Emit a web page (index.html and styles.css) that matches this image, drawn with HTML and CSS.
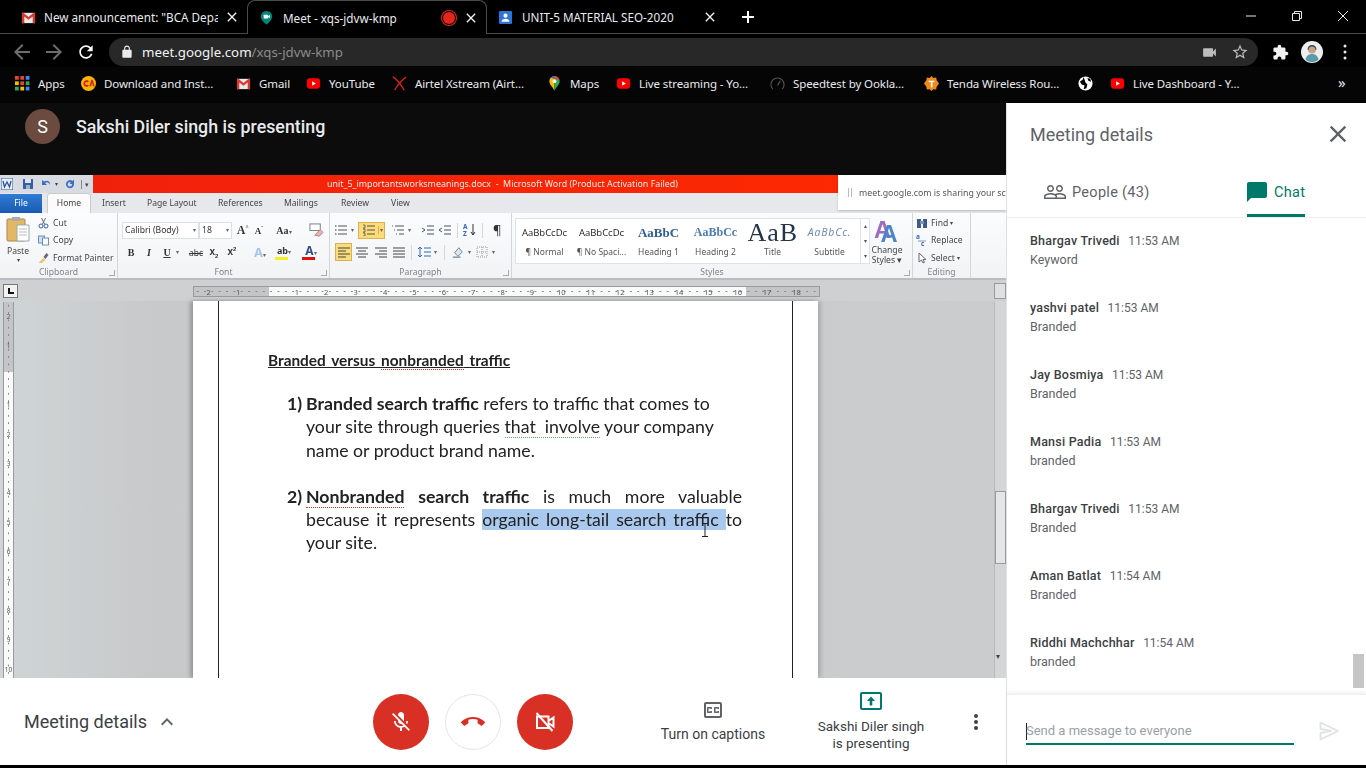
FILE: index.html
```html
<!DOCTYPE html>
<html lang="en">
<head>
<meta charset="utf-8">
<title>Meet - xqs-jdvw-kmp</title>
<link rel="stylesheet" href="styles.css">
</head>
<body>
<svg class="defs" width="0" height="0" aria-hidden="true">
  <symbol id="yt" viewBox="0 0 16 16"><rect x="1" y="2.500" width="14" height="11" rx="3" fill="#f00"/><path d="M6.500 5.500v5l4-2.500z" fill="#fff"/></symbol>
  <symbol id="gm" viewBox="0 0 16 16"><rect x="1" y="3" width="14" height="11" fill="#e8e8e8"/><path d="M1 3v11h2.500V7L8 10.500 12.500 7v7H15V3h-1.500L8 7.500 2.500 3z" fill="#d93a30"/></symbol>
  <symbol id="x" viewBox="0 0 24 24"><path d="M19 6.410L17.590 5 12 10.590 6.410 5 5 6.410 10.590 12 5 17.590 6.410 19 12 13.410 17.590 19 19 17.590 13.410 12z"/></symbol>
</svg>

<header class="tabstrip">
  <div class="tab tab-one">
    <svg class="fav" viewBox="0 0 16 16"><use href="#gm"/></svg>
    <span class="tab-title t1">New announcement: "BCA Depar</span>
    <svg class="tab-x" viewBox="0 0 24 24"><use href="#x"/></svg>
  </div>
  <div class="tab tab-active">
    <svg class="fav" viewBox="0 0 16 16"><path d="M8 1a6 6 0 0 0-6 6c0 3.500 3.500 6.500 6 8.500 2.500-2 6-5 6-8.500a6 6 0 0 0-6-6z" fill="#00897b"/><rect x="5" y="5" width="4.500" height="4" rx=".6" fill="#fff"/><path d="M9.500 6.500l2-1.200v3.400l-2-1.200z" fill="#fff"/></svg>
    <span class="tab-title t2">Meet - xqs-jdvw-kmp</span>
    <span class="rec"></span>
    <svg class="tab-x" viewBox="0 0 24 24"><use href="#x"/></svg>
  </div>
  <div class="tab tab-three">
    <svg class="fav" viewBox="0 0 16 16"><rect x="1" y="1" width="14" height="14" rx="1.500" fill="#2f74d8"/><circle cx="8" cy="6" r="2.200" fill="#fff"/><path d="M3.800 12.500c0-2.300 2-3.300 4.200-3.300s4.200 1 4.200 3.300z" fill="#fff"/></svg>
    <span class="tab-title t3">UNIT-5 MATERIAL SEO-2020</span>
    <svg class="tab-x" viewBox="0 0 24 24"><use href="#x"/></svg>
  </div>
  <svg class="newtab" viewBox="0 0 14 14"><path d="M6 1h2v5h5v2H8v5H6V8H1V6h5z"/></svg>
  <div class="winctl">
    <svg viewBox="0 0 12 12"><path d="M1 6h10"/></svg>
    <svg viewBox="0 0 12 12"><path d="M1.500 3.500h7v7h-7zM3.500 3.500v-2h7v7h-2"/></svg>
    <svg viewBox="0 0 12 12"><path d="M1 1l10 10M11 1L1 11"/></svg>
  </div>
</header>

<nav class="toolbar">
  <svg class="nav-ic dim" viewBox="0 0 24 24"><path d="M20 11H7.830l5.590-5.590L12 4l-8 8 8 8 1.410-1.410L7.830 13H20v-2z"/></svg>
  <svg class="nav-ic dim" viewBox="0 0 24 24"><path d="M4 11h12.170l-5.590-5.590L12 4l8 8-8 8-1.410-1.410L16.170 13H4v-2z"/></svg>
  <svg class="nav-ic" viewBox="0 0 24 24"><path d="M17.650 6.350C16.200 4.900 14.210 4 12 4c-4.420 0-7.990 3.580-7.990 8s3.570 8 7.990 8c3.730 0 6.840-2.550 7.730-6h-2.080c-.82 2.330-3.040 4-5.650 4-3.310 0-6-2.690-6-6s2.690-6 6-6c1.660 0 3.140.69 4.220 1.780L13 11h7V4l-2.350 2.350z"/></svg>
  <div class="omnibox">
    <svg class="lock" viewBox="0 0 24 24"><path d="M18 8h-1V6c0-2.760-2.240-5-5-5S7 3.240 7 6v2H6c-1.100 0-2 .9-2 2v10c0 1.100.9 2 2 2h12c1.100 0 2-.9 2-2V10c0-1.100-.9-2-2-2zM9 6c0-1.660 1.340-3 3-3s3 1.340 3 3v2H9V6z"/></svg>
    <span class="url"><b>meet.google.com</b>/xqs-jdvw-kmp</span>
    <svg class="omni-cam" viewBox="0 0 24 24"><path d="M17 10.500V7c0-.55-.45-1-1-1H4c-.55 0-1 .45-1 1v10c0 .55.45 1 1 1h12c.55 0 1-.45 1-1v-3.500l4 4v-11l-4 4z"/></svg>
    <svg class="omni-star" viewBox="0 0 24 24"><path d="M22 9.240l-7.190-.62L12 2 9.190 8.630 2 9.240l5.460 4.730L5.820 21 12 17.270 18.180 21l-1.630-7.030L22 9.240zM12 15.400l-3.760 2.270 1-4.280-3.320-2.880 4.380-.38L12 6.100l1.710 4.040 4.380.38-3.320 2.880 1 4.280L12 15.400z"/></svg>
  </div>
  <svg class="ext" viewBox="0 0 24 24"><path d="M20.500 11H19V7c0-1.100-.9-2-2-2h-4V3.500C13 2.120 11.880 1 10.500 1S8 2.120 8 3.500V5H4c-1.100 0-1.990.9-1.990 2v3.800H3.500c1.490 0 2.700 1.210 2.700 2.700s-1.210 2.700-2.700 2.700H2V20c0 1.100.9 2 2 2h3.800v-1.500c0-1.490 1.210-2.700 2.700-2.700 1.490 0 2.700 1.210 2.700 2.700V22H17c1.100 0 2-.9 2-2v-4h1.500c1.380 0 2.500-1.120 2.500-2.500S21.880 11 20.500 11z"/></svg>
  <svg class="profile" viewBox="0 0 22 22"><circle cx="11" cy="11" r="11" fill="#eee"/><circle cx="11" cy="8.500" r="4" fill="#c9a08a"/><path d="M6.500 8.500a4.500 4.500 0 0 1 9 0l-1 .5a3.500 3.500 0 0 0-7 0z" fill="#345"/><path d="M4.500 19c.5-4 3-6 6.500-6s6 2 6.500 6a11 11 0 0 1-13 0z" fill="#5b9aa8"/></svg>
  <svg class="kebab" viewBox="0 0 4 16"><circle cx="2" cy="2" r="1.500"/><circle cx="2" cy="8" r="1.500"/><circle cx="2" cy="14" r="1.500"/></svg>
</nav>

<nav class="bookmarks">
  <div class="bm bm-apps">
    <svg class="bm-ic" viewBox="0 0 14 14"><g fill="#ea4335"><rect width="3.500" height="3.500"/><rect x="5" width="3.500" height="3.500"/></g><rect x="10" width="3.500" height="3.500" fill="#4285f4"/><rect y="5" width="3.500" height="3.500" fill="#fbbc05"/><rect x="5" y="5" width="3.500" height="3.500" fill="#ea4335"/><rect x="10" y="5" width="3.500" height="3.500" fill="#34a853"/><rect y="10" width="3.500" height="3.500" fill="#34a853"/><rect x="5" y="10" width="3.500" height="3.500" fill="#fbbc05"/><rect x="10" y="10" width="3.500" height="3.500" fill="#4285f4"/></svg>
    <span>Apps</span>
  </div>
  <div class="bm bm-dl">
    <svg class="bm-ic" viewBox="0 0 16 16"><circle cx="8" cy="8" r="8" fill="#f7b500"/><path d="M2.500 8a3.500 3.500 0 0 1 6-2.500L7 7a1.500 1.500 0 1 0 0 2l1.500 1.500A3.500 3.500 0 0 1 2.500 8z" fill="#d6201f"/><path d="M9 11l2-7h1.500l2 7h-1.700l-1-4-1 4z" fill="#d6201f"/></svg>
    <span>Download and Inst...</span>
  </div>
  <div class="bm bm-gm"><svg class="bm-ic" viewBox="0 0 16 16"><use href="#gm"/></svg><span>Gmail</span></div>
  <div class="bm bm-yt"><svg class="bm-ic" viewBox="0 0 16 16"><use href="#yt"/></svg><span>YouTube</span></div>
  <div class="bm bm-air"><svg class="bm-ic" viewBox="0 0 16 16"><path d="M1 1c5 3 9 9 12 14M15 1C10 5 6 9 3 15" fill="none" stroke="#e0201c" stroke-width="1.400"/></svg><span>Airtel Xstream (Airt...</span></div>
  <div class="bm bm-maps"><svg class="bm-ic" viewBox="0 0 16 16"><path d="M8 0a5.500 5.500 0 0 0-5.500 5.500c0 4 4 6 5.500 10.500z" fill="#fbbc05"/><path d="M8 0a5.500 5.500 0 0 1 5.500 5.500c0 4-4 6-5.500 10.500z" fill="#34a853"/><path d="M4 1.700A5.500 5.500 0 0 1 8 0v3.500z" fill="#1a73e8"/><path d="M8 0a5.500 5.500 0 0 1 4.800 3L8 5z" fill="#ea4335"/><circle cx="8" cy="5.500" r="2" fill="#fff"/></svg><span>Maps</span></div>
  <div class="bm bm-live"><svg class="bm-ic" viewBox="0 0 16 16"><use href="#yt"/></svg><span>Live streaming - Yo...</span></div>
  <div class="bm bm-speed"><svg class="bm-ic" viewBox="0 0 16 16"><path d="M3 14a7 7 0 1 1 10 0M8 10l3-5" fill="none" stroke="#555" stroke-width="1.200"/></svg><span>Speedtest by Ookla...</span></div>
  <div class="bm bm-tenda"><svg class="bm-ic" viewBox="0 0 16 16"><path d="M8 0l2 2 3-.5.500 3 2.500 3.500-2.500 3.500-.5 3-3-.5L8 16l-2-2-3 .5-.5-3L0 8l2.500-3.500.5-3 3 .5z" fill="#ef8a1d"/><path d="M5 5h6v1.500H9V12H7.300V6.500H5z" fill="#fff"/></svg><span>Tenda Wireless Rou...</span></div>
  <div class="bm bm-globe"><svg class="bm-ic" viewBox="0 0 16 16"><circle cx="8" cy="8" r="7.500" fill="#fff"/><path d="M6 1l-1 3-3 2 2 3 3 1-1 4 3-1 1-4-2-2zM10 2l1 3 3 1-1-3z" fill="#000"/></svg></div>
  <div class="bm bm-dash"><svg class="bm-ic" viewBox="0 0 16 16"><use href="#yt"/></svg><span>Live Dashboard - Y...</span></div>
  <span class="more">»</span>
</nav>

<main class="meet">
  <section class="stage">
    <div class="presenter">
      <span class="avatar">S</span>
      <span class="presenter-name">Sakshi Diler singh is presenting</span>
    </div>

    <div class="word">
      <div class="w-title">
        <div class="qat">
          <svg class="qat-w" viewBox="0 0 12 12"><rect width="12" height="12" fill="#e6eef8" stroke="#2a5699"/><path d="M2 3l1.500 6L6 4l2.500 5L10 3" fill="none" stroke="#2a5699" stroke-width="1.300"/></svg>
          <svg class="qat-i q-save" viewBox="0 0 12 12"><rect x="1" y="1" width="10" height="10" fill="#3b5da8"/><rect x="3" y="1" width="6" height="4" fill="#dfe6f3"/><rect x="4" y="7" width="4" height="4" fill="#9bb"/></svg>
          <svg class="qat-i q-undo" viewBox="0 0 12 12"><path d="M2 2v5h5L5 5c2-1.500 4-.5 5 2 .5-3-2-5.500-6-3.500z" fill="#3d6fc0"/></svg>
          <span class="qat-caret">▾</span>
          <svg class="qat-i q-redo" viewBox="0 0 12 12"><path d="M10 6a4 4 0 1 1-1.500-3L10 1.500V6H5.500l1.500-1.500A2.200 2.200 0 1 0 8 6z" fill="#3d6fc0"/></svg>
          <span class="qat-end">▾</span>
        </div>
        <div class="w-redbar">unit_5_importantsworksmeanings.docx  -  Microsoft Word (Product Activation Failed)</div>
      </div>

      <div class="w-tabs">
        <span class="w-file">File</span>
        <span class="w-home">Home</span>
        <span class="wt-insert">Insert</span>
        <span class="wt-page">Page Layout</span>
        <span class="wt-ref">References</span>
        <span class="wt-mail">Mailings</span>
        <span class="wt-review">Review</span>
        <span class="wt-view">View</span>
      </div>

      <div class="ribbon">
        <div class="group g-clip">
          <div class="g-body clip">
            <div class="paste">
              <svg viewBox="0 0 24 26"><rect x="1" y="3" width="18" height="22" rx="1" fill="#e2b768" stroke="#a98a4c"/><rect x="6" y="1" width="8" height="4" fill="#aaa"/><path d="M11 9h12v16H11z" fill="#fff" stroke="#9aa"/><path d="M13 13h8M13 16h8M13 19h8" stroke="#bbb"/></svg>
              <span>Paste</span><i>▾</i>
            </div>
            <ul class="cliplist">
              <li><svg viewBox="0 0 12 12"><path d="M4 1l3 6M8 1L5 7" stroke="#667" fill="none"/><circle cx="3.500" cy="9" r="2" fill="none" stroke="#3a5fa8"/><circle cx="8.500" cy="9" r="2" fill="none" stroke="#3a5fa8"/></svg>Cut</li>
              <li><svg viewBox="0 0 12 12"><rect x="1" y="2" width="6" height="7" fill="#cfe0f3" stroke="#6a8fbf"/><rect x="5" y="4" width="6" height="7" fill="#fff" stroke="#6a8fbf"/></svg>Copy</li>
              <li><svg viewBox="0 0 12 12"><path d="M1 11l5-5 2 2-4 3z" fill="#e8c560"/><path d="M6 5l3-4 2 2-3 4z" fill="#667"/></svg>Format Painter</li>
            </ul>
          </div>
          <div class="g-label">Clipboard<i class="launch"></i></div>
        </div>

        <div class="group g-font">
          <div class="g-body stack">
            <div class="row r-font1">
              <span class="sel-font">Calibri (Body)<i>▾</i></span><span class="sel-size">18<i>▾</i></span>
              <b class="grow-a">A<sup>^</sup></b><b class="shrink-a">A<sup>ˇ</sup></b>
              <b class="case-a">Aa<i>▾</i></b>
              <svg class="clear-f" viewBox="0 0 16 16"><rect x="1" y="1" width="11" height="7" fill="#fff" stroke="#778"/><path d="M6 13l6-6 3 3-4 4z" fill="#e9b4b0" stroke="#a88"/></svg>
            </div>
            <div class="row r-font2">
              <b class="f-b">B</b><em class="f-i">I</em><u class="f-u">U</u><i class="f-car">▾</i>
              <s class="f-s">abc</s><b class="f-x">x<sub>2</sub></b><b class="f-x2">x<sup>2</sup></b>
              <b class="f-eff">A<i>▾</i></b>
              <b class="f-hi">ab<i>▾</i></b>
              <b class="f-col">A<i>▾</i></b>
            </div>
          </div>
          <div class="g-label">Font<i class="launch"></i></div>
        </div>

        <div class="group g-para">
          <div class="g-body stack">
            <div class="row r-p1">
              <svg class="pi" viewBox="0 0 14 12"><path d="M4 2h9M4 6h9M4 10h9" stroke="#555"/><path d="M1 2h1.500M1 6h1.500M1 10h1.500" stroke="#333"/></svg><i class="car">▾</i>
              <span class="hl-split"><svg class="pi" viewBox="0 0 14 12"><path d="M5 2h8M5 6h8M5 10h8" stroke="#555"/><path d="M1 1h2v3H1M1 5h2v3H1M1 9h2v3H1" fill="none" stroke="#345" stroke-width=".7"/></svg><i class="split-c">▾</i></span>
              <svg class="pi ml-6" viewBox="0 0 14 12"><path d="M4 2h9M6 6h7M8 10h5" stroke="#555"/><path d="M1 2h1M3 6h1M5 10h1" stroke="#36b"/></svg><i class="car">▾</i>
              <svg class="pi ml-8" viewBox="0 0 14 12"><path d="M6 2h7M6 6h7M6 10h7M1 4l3 2-3 2" stroke="#456" fill="none"/></svg>
              <svg class="pi ml-3" viewBox="0 0 14 12"><path d="M6 2h7M6 6h7M6 10h7M4 4L1 6l3 2" stroke="#456" fill="none"/></svg>
              <span class="vsep"></span>
              <svg class="pi sort" viewBox="0 0 14 14"><text x="0" y="6" class="svgt">A</text><text x="0" y="13" class="svgt">Z</text><path d="M10 1v11M8 9l2 3 2-3" stroke="#333" fill="none"/></svg>
              <span class="vsep"></span>
              <span class="pilcrow">¶</span>
            </div>
            <div class="row r-p2">
              <span class="hl-box"><svg class="pi" viewBox="0 0 14 12"><path d="M1 2h12M1 5h8M1 8h12M1 11h8" stroke="#444" stroke-width="1.200"/></svg></span>
              <svg class="pi al-c" viewBox="0 0 14 12"><path d="M1 2h12M3 5h8M1 8h12M3 11h8" stroke="#444" stroke-width="1.200"/></svg>
              <svg class="pi al-n" viewBox="0 0 14 12"><path d="M1 2h12M5 5h8M1 8h12M5 11h8" stroke="#444" stroke-width="1.200"/></svg>
              <svg class="pi al-n" viewBox="0 0 14 12"><path d="M1 2h12M1 5h12M1 8h12M1 11h12" stroke="#444" stroke-width="1.200"/></svg>
              <span class="vsep"></span>
              <svg class="pi" viewBox="0 0 14 12"><path d="M7 2h7M7 6h7M7 10h7M3 1v10M1 3l2-2 2 2M1 9l2 2 2-2" stroke="#36b" fill="none"/></svg><i class="car">▾</i>
              <span class="vsep"></span>
              <svg class="pi shade" viewBox="0 0 14 14"><path d="M3 8l5-6 4 5-5 5z" fill="#dfe6ee" stroke="#678"/><path d="M1 13h9" stroke="#789" stroke-width="1.500"/></svg><i class="car">▾</i>
              <svg class="pi border" viewBox="0 0 12 12"><path d="M1 1h10v10H1zM6 1v10M1 6h10" stroke="#999" stroke-dasharray="1 1" fill="none"/></svg><i class="car">▾</i>
            </div>
          </div>
          <div class="g-label">Paragraph<i class="launch"></i></div>
        </div>

        <div class="group g-styles">
          <div class="g-body styles-body">
            <div class="gallery">
              <div class="style-it"><span class="s-n">AaBbCcDc</span><small>¶ Normal</small></div>
              <div class="style-it"><span class="s-n">AaBbCcDc</span><small>¶ No Spaci...</small></div>
              <div class="style-it"><span class="s-h1">AaBbC</span><small>Heading 1</small></div>
              <div class="style-it"><span class="s-h2">AaBbCc</span><small>Heading 2</small></div>
              <div class="style-it"><span class="s-t">AaB</span><small>Title</small></div>
              <div class="style-it"><span class="s-s">AaBbCc.</span><small>Subtitle</small></div>
              <div class="g-scroll"><i>▴</i><i>▾</i><i>▾</i></div>
            </div>
            <div class="change">
              <svg viewBox="0 0 26 24"><text x="1" y="18" class="bigA a1">A</text><text x="7" y="22" class="bigA a2">A</text></svg>
              <span>Change</span><span>Styles ▾</span>
            </div>
          </div>
          <div class="g-label">Styles<i class="launch"></i></div>
        </div>

        <div class="group g-edit">
          <ul class="g-body editlist">
            <li><svg viewBox="0 0 12 12"><rect x="1" y="2" width="4" height="9" fill="#3c5a8c"/><rect x="7" y="2" width="4" height="9" fill="#3c5a8c"/><rect x="4" y="4" width="4" height="3" fill="#7c90b0"/></svg>Find <i>▾</i></li>
            <li><svg viewBox="0 0 12 12"><text x="0" y="5" class="svgt">a</text><path d="M2 7h8" stroke="#89a"/><text x="5" y="12" class="svgt">c</text></svg>Replace</li>
            <li><svg viewBox="0 0 12 12"><path d="M3 1v9l2.500-2 1.500 3 1.500-.7L7 7.500h3z" fill="#fff" stroke="#667"/></svg>Select <i>▾</i></li>
          </ul>
          <div class="g-label">Editing</div>
        </div>
      </div>

      <div class="w-ruler-row">
        <span class="tabstop"><b></b></span>
        <div class="h-ruler">
          <span>2</span><span>1</span><span></span><span>1</span><span>2</span><span>3</span><span>4</span><span>5</span><span>6</span><span>7</span><span>8</span><span>9</span><span>10</span><span>11</span><span>12</span><span>13</span><span>14</span><span>15</span><span>16</span><span>17</span><span>18</span>
        </div>
        <span class="view-btn"></span>
      </div>

      <div class="w-doc">
        <div class="v-ruler">
          <span>2</span><span>1</span><span></span><span>1</span><span>2</span><span>3</span><span>4</span><span>5</span><span>6</span><span>7</span><span>8</span><span>9</span><span>10</span>
        </div>
        <div class="page">
          <div class="textarea">
            <h1 class="doc-h">Branded versus <span class="spell">nonbranded</span> traffic</h1>
            <div class="li">
              <span class="num">1)</span>
              <p><b>Branded search traffic</b> refers to traffic that comes to your site through queries <span class="gram">that&nbsp; involve</span> your company name or product brand name.</p>
            </div>
            <div class="li just">
              <span class="num">2)</span>
              <p><b class="spellb">Nonbranded</b> <b>search traffic</b> is much more valuable because it represents <span class="sel">organic long-tail search traffic <svg class="ibeam" viewBox="0 0 8 14"><path d="M1 .5h6M4 .5v13M1 13.500h6" stroke="#222" fill="none"/></svg></span>to your site.</p>
            </div>
          </div>
        </div>
        <div class="w-scroll">
          <i class="sc-thumb"></i>
          <i class="sc-down">▾</i>
        </div>
      </div>

      <div class="share-note"><span class="bars"></span>meet.google.com is sharing your sc</div>
    </div>

    <footer class="callbar">
      <div class="details-btn">Meeting details
        <svg viewBox="0 0 24 24"><path d="M12 8l-6 6 1.410 1.410L12 10.830l4.590 4.580L18 14z"/></svg>
      </div>
      <div class="round-btns">
        <span class="round red"><svg viewBox="0 0 24 24"><path d="M19 11h-1.700c0 .74-.16 1.430-.43 2.050l1.230 1.230c.56-.98.9-2.090.9-3.280zm-4.020.17c0-.06.02-.11.02-.17V5c0-1.660-1.340-3-3-3S9 3.340 9 5v.18l5.980 5.990zM4.270 3L3 4.270l6.010 6.010V11c0 1.660 1.330 3 2.990 3 .22 0 .44-.03.65-.08l1.660 1.660c-.71.33-1.500.52-2.310.52-2.760 0-5.300-2.100-5.300-5.100H5c0 3.410 2.720 6.230 6 6.720V21h2v-3.280c.91-.13 1.770-.45 2.540-.9L19.730 21 21 19.730 4.270 3z"/></svg></span>
        <span class="round hang"><svg viewBox="0 0 24 24"><path d="M12 9c-1.600 0-3.150.25-4.600.72v3.100c0 .39-.23.74-.56.9-.98.49-1.870 1.120-2.660 1.850-.18.18-.43.28-.7.28-.28 0-.53-.11-.71-.29L.29 13.080c-.18-.17-.29-.42-.29-.7 0-.28.11-.53.29-.71C3.340 8.780 7.460 7 12 7s8.660 1.780 11.710 4.670c.18.18.29.43.29.71 0 .28-.11.53-.29.71l-2.480 2.480c-.18.18-.43.29-.71.29-.27 0-.52-.11-.7-.28-.79-.74-1.690-1.360-2.670-1.850-.33-.16-.56-.5-.56-.9v-3.100C15.150 9.250 13.600 9 12 9z"/></svg></span>
        <span class="round red"><svg viewBox="0 0 24 24"><path d="M4 6.500h11.500v11.500H4zM15.500 11l5-3.500v9l-5-3.500" fill="none" stroke="#fff" stroke-width="2"/><path d="M3.500 3l16 18" stroke="#fff" stroke-width="2" fill="none"/></svg></span>
      </div>
      <div class="caption-btn">
        <svg viewBox="0 0 24 24"><path d="M19 4H5c-1.110 0-2 .9-2 2v12c0 1.100.89 2 2 2h14c1.100 0 2-.9 2-2V6c0-1.100-.9-2-2-2zm0 14H5V6h14v12zM7 15h3c.55 0 1-.45 1-1v-1H9.500v.5h-2v-3h2v.5H11v-1c0-.55-.45-1-1-1H7c-.55 0-1 .45-1 1v4c0 .55.45 1 1 1zm7 0h3c.55 0 1-.45 1-1v-1h-1.500v.5h-2v-3h2v.5H18v-1c0-.55-.45-1-1-1h-3c-.55 0-1 .45-1 1v4c0 .55.45 1 1 1z"/></svg>
        <span>Turn on captions</span>
      </div>
      <div class="present-btn">
        <svg viewBox="0 0 24 24"><path d="M21 3H3c-1.100 0-2 .9-2 2v14c0 1.100.9 2 2 2h18c1.100 0 2-.9 2-2V5c0-1.100-.9-2-2-2zm0 16H3V5h18v14zM12 7.500l-4 4.500h2.700v4.500h2.600V12H16z"/></svg>
        <span>Sakshi Diler singh<br>is presenting</span>
      </div>
      <svg class="call-more" viewBox="0 0 4 16"><circle cx="2" cy="2" r="2"/><circle cx="2" cy="8" r="2"/><circle cx="2" cy="14" r="2"/></svg>
    </footer>
  </section>

  <aside class="panel">
    <div class="panel-head">
      <span>Meeting details</span>
      <svg viewBox="0 0 24 24"><use href="#x"/></svg>
    </div>
    <div class="panel-tabs">
      <div class="ptab people">
        <svg viewBox="0 0 24 24"><path d="M16.500 13c-1.200 0-3.070.34-4.500 1-1.430-.67-3.300-1-4.500-1C5.330 13 1 14.080 1 16.250V19h22v-2.750c0-2.170-4.330-3.250-6.500-3.250zm-4 4.500h-10v-1.250c0-.54 2.560-1.750 5-1.750s5 1.210 5 1.750v1.250zm9 0H14v-1.250c0-.46-.2-.86-.52-1.220.88-.3 1.960-.53 3.020-.53 2.440 0 5 1.210 5 1.750v1.250zM7.500 12c1.930 0 3.500-1.570 3.500-3.500S9.430 5 7.500 5 4 6.570 4 8.500 5.570 12 7.500 12zm0-5.500c1.100 0 2 .9 2 2s-.9 2-2 2-2-.9-2-2 .9-2 2-2zm9 5.500c1.930 0 3.500-1.570 3.500-3.500S18.430 5 16.500 5 13 6.570 13 8.500s1.570 3.500 3.500 3.500zm0-5.500c1.100 0 2 .9 2 2s-.9 2-2 2-2-.9-2-2 .9-2 2-2z"/></svg>
        <span>People (43)</span>
      </div>
      <div class="ptab chat">
        <svg viewBox="0 0 20 20"><path d="M2 0h16c1.100 0 2 .9 2 2v12c0 1.100-.9 2-2 2H4l-4 4V2C0 .9.9 0 2 0z"/></svg>
        <span>Chat</span>
      </div>
    </div>
    <div class="messages">
      <div class="msg"><div class="meta"><b>Bhargav Trivedi</b><time>11:53 AM</time></div><p>Keyword</p></div>
      <div class="msg"><div class="meta"><b>yashvi patel</b><time>11:53 AM</time></div><p>Branded</p></div>
      <div class="msg"><div class="meta"><b>Jay Bosmiya</b><time>11:53 AM</time></div><p>Branded</p></div>
      <div class="msg"><div class="meta"><b>Mansi Padia</b><time>11:53 AM</time></div><p>branded</p></div>
      <div class="msg"><div class="meta"><b>Bhargav Trivedi</b><time>11:53 AM</time></div><p>Branded</p></div>
      <div class="msg"><div class="meta"><b>Aman Batlat</b><time>11:54 AM</time></div><p>Branded</p></div>
      <div class="msg"><div class="meta"><b>Riddhi Machchhar</b><time>11:54 AM</time></div><p>branded</p></div>
      <i class="chat-thumb"></i>
    </div>
    <div class="compose">
      <div class="compose-input"><span class="caret"></span>Send a message to everyone</div>
      <svg viewBox="0 0 24 24"><path d="M3.500 3.500L21 12 3.500 20.500v-6.500L14 12 3.500 10z" fill="none" stroke="#e0e2e5" stroke-width="1.800" stroke-linejoin="round"/></svg>
    </div>
  </aside>
</main>
</body>
</html>
```
FILE: styles.css
```css
* { box-sizing: border-box; }
html, body { margin: 0; padding: 0; }
body {
  width: 1366px; height: 768px; overflow: hidden; background: #000;
  font-family: "Noto Sans", "Open Sans", sans-serif; display: flex; flex-direction: column;
}
.defs { position: absolute; }
ul { list-style: none; margin: 0; padding: 0; }
i { font-style: normal; }

/* tab strip */
.tabstrip { height: 34px; flex: none; display: flex; align-items: stretch; background: #000; border-bottom: 1px solid #4a4a4a; }
.tab { display: flex; align-items: center; color: #e8eaed; height: 34px; font-size: 11.700px; flex: none; }
.tab-one { width: 247px; padding-left: 21px; }
.tab-active { width: 240px; padding-left: 11px; background: #000; border: 1px solid #4a4a4a; border-bottom: 0; border-radius: 8px 8px 0 0; }
.tab-three { width: 238px; padding-left: 11px; }
.fav { width: 15px; height: 15px; flex: none; }
.tab-title { white-space: nowrap; overflow: hidden; display: block; flex: none; }
.t1 { width: 174px; margin-left: 8px; }
.t2 { width: 160px; margin-left: 9px; }
.t3 { width: 174px; margin-left: 9px; }
.tab-x { width: 16px; height: 16px; fill: #f1f3f4; flex: none; margin-left: 6px; }
.rec { width: 12px; height: 12px; border-radius: 50%; background: #e3261c; box-shadow: 0 0 0 1px #000, 0 0 0 2px #e3261c; flex: none; }
.tab-active .tab-x { margin-left: 8px; }
.newtab { width: 14px; height: 14px; fill: #fff; margin: 10px 0 0 16px; }
.winctl { margin-left: auto; display: flex; gap: 34px; padding: 10px 17px 0 0; }
.winctl svg { width: 12px; height: 12px; fill: none; stroke: #e8e8e8; stroke-width: 1; }

/* toolbar */
.toolbar { height: 33px; flex: none; display: flex; align-items: center; background: #000; padding: 3px 0 0 10px; }
.nav-ic { width: 24px; height: 24px; fill: #fff; margin-right: 8px; flex: none; }
.nav-ic.dim { fill: #6d6d6d; }
.nav-ic:nth-child(3) { width: 20px; height: 20px; margin-right: 13px; margin-left: 2px; }
.omnibox { width: 1149px; height: 28px; background: #282828; border-radius: 14px; display: flex; align-items: center; padding-left: 11px; }
.lock { width: 14px; height: 14px; fill: #e8eaed; flex: none; }
.url { margin-left: 8px; font-size: 13.300px; color: #8a8a8a; }
.url b { font-weight: 400; color: #f1f3f4; }
.omni-cam { width: 17px; height: 17px; fill: #bdbdbd; margin-left: auto; }
.omni-star { width: 18px; height: 18px; fill: #bdbdbd; margin: 0 9px 0 13px; }
.ext { width: 17px; height: 17px; fill: #f1f3f4; margin-left: 14px; }
.profile { width: 22px; height: 22px; margin-left: 12px; }
.kebab { width: 4px; height: 16px; fill: #e8eaed; margin-left: 20px; }

/* bookmarks */
.bookmarks { height: 36px; flex: none; display: flex; align-items: center; background: #050505; color: #e8eaed; font-size: 11.500px; letter-spacing: -.1px; padding-bottom: 3px; }
.bm { display: flex; align-items: center; white-space: nowrap; flex: none; }
.bm-ic { width: 15px; height: 15px; flex: none; margin-right: 8px; }
.bm-apps { width: 81px; padding-left: 15px; }
.bm-dl { width: 155px; }
.bm-gm { width: 70px; }
.bm-yt { width: 86px; }
.bm-air { width: 155px; }
.bm-maps { width: 69px; }
.bm-live { width: 154px; }
.bm-speed { width: 154px; }
.bm-tenda { width: 154px; }
.bm-globe { width: 32px; }
.bm-dash { width: 228px; }
.more { font-size: 15px; color: #e8eaed; margin-top: -3px; }

/* meet layout */
.meet { flex: none; height: 662px; display: grid; grid-template-columns: 1006px 360px; grid-template-rows: 662px; }
.stage { display: flex; flex-direction: column; min-width: 0; min-height: 0; }
.presenter { height: 72px; flex: none; background: #0c0c0c; display: flex; align-items: flex-start; padding: 6px 0 0 25px; }
.avatar { width: 35px; height: 35px; border-radius: 50%; background: #6b4a40; color: #fff; display: flex; align-items: center; justify-content: center; font: 400 18px Roboto, sans-serif; }
.presenter-name { margin: 7px 0 0 16px; color: #e8eaed; font: 500 17.800px Roboto, sans-serif; }

/* word */
.word { height: 503px; flex: none; position: relative; background: #d0d1d3; filter: blur(.35px); overflow: hidden; font-family: "Noto Sans", sans-serif; color: #444; }
.w-title { height: 18px; display: flex; }
.qat { width: 93px; flex: none; background: #d8dce2; display: flex; align-items: center; padding-left: 1px; }
.qat-w { width: 12px; height: 12px; flex: none; }
.qat-i { width: 12px; height: 12px; flex: none; }
.q-save { margin-left: 9px; }
.q-undo { margin-left: 6px; }
.qat-caret { font-size: 6px; margin-left: 3px; width: 5px; }
.q-redo { margin-left: 4px; }
.qat-end { font-size: 7px; border-left: 1px solid #888; padding-left: 3px; margin-left: 5px; }
.w-redbar { flex: 1; background: linear-gradient(90deg, #f0210c, #ff2a00); color: #fbe9e4; font-size: 8.900px; white-space: pre; padding: 3px 0 0 234px; line-height: 12px; }
.w-tabs { height: 20px; display: flex; align-items: center; background: #e6e8eb; font-size: 8.600px; }
.w-tabs span { display: block; flex: none; }
.w-file { width: 42px; height: 19px; background: linear-gradient(#2f7bd6, #1a5bb0); color: #fff; text-align: center; line-height: 19px; margin-top: 1px; }
.w-home { width: 44px; height: 20px; margin-left: 5px; background: #fbfbfc; border: 1px solid #c8ccd0; border-bottom: 0; border-radius: 3px 3px 0 0; text-align: center; line-height: 19px; }
.wt-insert { margin-left: 11px; width: 45px; }
.wt-page { width: 71px; }
.wt-ref { width: 66px; }
.wt-mail { width: 57px; }
.wt-review { width: 50px; }
.ribbon { height: 67px; display: flex; background: linear-gradient(#fbfcfd, #f1f3f5); border-bottom: 2px solid #b9bcc0; }
.group { position: relative; border-right: 1px solid #d4d7da; display: flex; flex-direction: column; flex: none; }
.g-clip { width: 118px; }
.g-font { width: 212px; }
.g-para { width: 182px; }
.g-styles { width: 401px; }
.g-edit { width: 58px; }
.g-body { height: 54px; flex: none; }
.g-label { height: 11px; font-size: 8.600px; line-height: 11px; text-align: center; color: #808488; position: relative; }
.launch { position: absolute; right: 2px; top: 3px; width: 6px; height: 6px; border: 1px solid #aaa; border-width: 0 1px 1px 0; }
.clip { display: flex; }
.paste { width: 36px; display: flex; flex-direction: column; align-items: center; font-size: 8.600px; line-height: 10px; padding-top: 3px; }
.paste svg { width: 24px; height: 26px; margin-bottom: 4px; }
.paste i { font-size: 6px; line-height: 8px; }
.cliplist { padding: 1px 0 0 1px; font-size: 8.600px; }
.cliplist li, .editlist li { display: flex; align-items: center; height: 17.500px; white-space: nowrap; }
.cliplist svg { width: 13px; height: 12px; margin-right: 3px; }
.stack { padding: 8px 0 0 4px; display: flex; flex-direction: column; gap: 4px; }
.row { display: flex; align-items: center; height: 18px; color: #333; flex: none; }
.sel-font, .sel-size { display: flex; justify-content: space-between; align-items: center; height: 17px; background: #fff; border: 1px solid #dcdfe3; font-size: 8.600px; padding: 0 2px; }
.sel-font { width: 77px; }
.sel-size { width: 33px; }
.row i { font-size: 6px; color: #666; font-style: normal; font-weight: 400; }
.row sup, .row sub { font-size: 6px; }
.grow-a { font: 700 11.500px "Liberation Serif", serif; margin-left: 5px; }
.shrink-a { font: 700 9px "Liberation Serif", serif; margin-left: 6px; }
.case-a { font: 700 10px "Liberation Serif", serif; margin-left: 13px; }
.clear-f { width: 15px; height: 15px; margin-left: 17px; }
.r-font2 b, .r-font2 em, .r-font2 u, .r-font2 s { display: block; text-align: center; flex: none; }
.f-b { font: 700 10px "Liberation Serif", serif; width: 18px; }
.f-i { font: italic 700 10px "Liberation Serif", serif; width: 18px; }
.f-u { font: 700 10px "Liberation Serif", serif; width: 18px; }
.f-car { width: 10px; text-align: left; }
.f-s { font: 8.500px "Noto Sans", sans-serif; width: 20px; }
.f-x { font: 700 10px "Liberation Sans", sans-serif; width: 16px; }
.f-x2 { font: 700 10px "Liberation Sans", sans-serif; width: 20px; }
.f-eff { font: 700 13px "Noto Sans", sans-serif; color: #a8c4e8; width: 24px; margin-left: 6px; }
.f-hi { font: 700 9px "Noto Sans", sans-serif; width: 24px; height: 15px; line-height: 11px; background: linear-gradient(#f6ef26, #f6ef26) 3px 100% / 13px 3px no-repeat; }
.f-col { font: 700 12px "Noto Sans", sans-serif; color: #2f4d8a; margin-left: 3px; height: 15px; line-height: 11px; width: 24px; background: linear-gradient(#e01010, #e01010) 3px 100% / 13px 3px no-repeat; }
.pi { width: 14px; height: 12px; flex: none; }
.car { width: 8px; text-align: center; flex: none; }
.hl-split { display: flex; align-items: center; height: 17px; background: #fbdc7a; border: 1px solid #e0b050; margin-left: 2px; padding: 0 0 0 3px; width: 27px; flex: none; }
.split-c { border-left: 1px solid #e0b050; margin-left: 2px; padding-left: 1px; }
.hl-box { display: flex; align-items: center; justify-content: center; width: 17px; height: 18px; background: #fbdc7a; border: 1px solid #e0b050; flex: none; margin-left: 1px; }
.vsep { width: 1px; height: 15px; background: #d4d7da; margin: 0 5px; flex: none; }
.ml-3 { margin-left: 3px; }
.ml-6 { margin-left: 6px; }
.ml-8 { margin-left: 8px; }
.al-c { margin-left: 3px; }
.al-n { margin-left: 4.500px; }
.shade { margin-left: 1px; }
.border { margin-left: 2px; }
.sort { height: 14px; }
.svgt { font: 700 6.500px "Noto Sans", sans-serif; fill: #36b; }
.pilcrow { font-size: 13px; margin-left: 5px; }
.styles-body { display: flex; padding: 5px 0 0 3px; }
.gallery { width: 355px; height: 46px; flex: none; background: #fff; border: 1px solid #e0e3e6; display: flex; }
.style-it { width: 57px; flex: none; display: flex; flex-direction: column; align-items: center; overflow: hidden; }
.style-it > span { height: 27px; display: block; line-height: 27px; white-space: nowrap; width: 50px; overflow: hidden; text-align: center; }
.style-it small { font-size: 8.500px; line-height: 12px; color: #555; white-space: nowrap; }
.s-n { font: 9.500px "Open Sans", sans-serif; color: #222; }
.s-h1 { font: 700 13px "Liberation Serif", serif; color: #2e5e94; }
.s-h2 { font: 700 12px "Liberation Serif", serif; color: #4a7ab4; }
.s-t { font: 26px "Liberation Serif", serif; color: #24344a; letter-spacing: 1px; }
.s-s { font: italic 10.500px "Noto Sans", sans-serif; color: #6e8fba; letter-spacing: .8px; }
.g-scroll { width: 9px; margin-left: 2px; display: flex; flex-direction: column; border-left: 1px solid #e0e3e6; font-size: 6px; color: #555; text-align: center; line-height: 15px; }
.change { flex: 1; min-width: 0; display: flex; flex-direction: column; align-items: center; font-size: 8.600px; line-height: 10px; color: #444; padding-right: 8px; white-space: nowrap; }
.change svg { width: 28px; height: 27px; }
.bigA { font: 700 22px "Liberation Sans", sans-serif; }
.a1 { fill: #9c6cc0; }
.a2 { fill: #4a86c8; }
.editlist { padding: 1px 0 0 3px; font-size: 8.600px; }
.editlist svg { width: 12px; height: 12px; margin-right: 3px; flex: none; }
.editlist i { font-size: 6px; margin-left: 2px; }
.w-ruler-row { height: 21px; display: flex; align-items: flex-start; background: #cfd0d2; }
.tabstop { width: 15px; height: 14px; margin: 4px 0 0 3px; border: 1px solid #777; background: #f2f2f2; flex: none; display: flex; align-items: center; justify-content: center; }
.tabstop b { width: 6px; height: 6px; border: solid #111; border-width: 0 0 2px 2px; }
.h-ruler { width: 627px; height: 11px; margin: 6px 0 0 175px; display: flex; font-size: 7.500px; line-height: 10px; color: #555; border: 1px solid #9a9a9a; background: radial-gradient(circle, #888 .6px, transparent .9px) 0 0 / 7.350px 9px repeat-x, linear-gradient(90deg, #c4c5c7 0 75px, #fafafa 75px 552px, #c4c5c7 552px); }
.h-ruler span { width: 29.400px; text-align: center; flex: none; }
.view-btn { width: 12px; height: 16px; margin: 3px 0 0 174px; background: #dfe0e2; border: 1px solid #9a9a9a; }
.w-doc { height: 377px; display: flex; background: linear-gradient(90deg, #cfd5d6, #c8c9cb 15%, #cbccce); }
.v-ruler { width: 11px; margin: 1px 0 0 3px; flex: none; display: flex; flex-direction: column; font-size: 6.500px; line-height: 29.400px; color: #555; text-align: center; border: 1px solid #9a9a9a; border-width: 0 1px; background: radial-gradient(circle, #888 .6px, transparent .9px) 0 0 / 9px 7.350px repeat-y, linear-gradient(#c4c5c7 0 70px, #fafafa 70px); }
.v-ruler span { height: 29.400px; flex: none; }
.page { width: 625px; margin-left: 179px; background: #fff; padding: 0 25px; box-shadow: -3px 0 4px rgba(0,0,0,.25), 3px 0 4px rgba(0,0,0,.15); flex: none; }
.textarea { height: 100%; border: 1px solid #222; border-width: 0 1px; padding: 49px 49px 0 49px; font-family: Lato, "Open Sans", sans-serif; color: #222; font-size: 17.700px; line-height: 23.300px; }
.doc-h { margin: 0 0 22px; font-size: 15.400px; font-weight: 700; line-height: 20px; text-decoration: underline; word-spacing: 2px; }
.spell { border-bottom: 1px dotted #d8352a; }
.li { display: flex; margin: 0 0 22.700px; padding-left: 19px; }
.num { width: 19px; font-weight: 700; flex: none; }
.li p { margin: 0; flex: 1; max-width: 436px; }
.just p { text-align: justify; }
.gram { border-bottom: 1px dotted #5fb35f; }
.spellb { border-bottom: 1px dotted #d8352a; }
.sel { background: #a9c9ee; position: relative; }
.ibeam { position: absolute; right: 17px; top: 14px; width: 8px; height: 14px; }
.w-scroll { width: 12px; margin-left: auto; position: relative; background: #d4d5d7; border-left: 1px solid #b8b9bb; flex: none; }
.sc-thumb { position: absolute; left: 0; right: 0; top: 190px; height: 73px; background: #e4e5e7; border: 1px solid #9a9a9a; }
.sc-down { position: absolute; left: 1px; top: 349px; font-size: 8px; color: #444; }
.share-note { position: absolute; left: 838px; top: 0; width: 168px; height: 35px; background: #fff; font-size: 8.800px; color: #555; display: flex; align-items: center; white-space: nowrap; overflow: hidden; padding-left: 10px; box-shadow: 0 1px 2px rgba(0,0,0,.2); }
.bars { width: 4px; height: 9px; border: solid #bbb; border-width: 0 1px; margin-right: 7px; flex: none; }

/* call bar */
.callbar { height: 87px; flex: none; background: #fff; display: flex; align-items: center; }
.details-btn { width: 373px; padding-left: 24px; font: 400 18px Roboto, sans-serif; color: #3c4043; display: flex; align-items: center; flex: none; }
.details-btn svg { width: 24px; height: 24px; fill: #5f6368; margin-left: 8px; }
.round-btns { display: flex; gap: 16px; flex: none; }
.round { width: 56px; height: 56px; border-radius: 50%; display: flex; align-items: center; justify-content: center; }
.round svg { width: 24px; height: 24px; fill: #fff; }
.red { background: #d93025; }
.hang { border: 1px solid #e4e4e4; }
.hang svg { fill: #d93025; }
.caption-btn { width: 120px; margin-left: 80px; display: flex; flex-direction: column; align-items: center; font: 400 14px Roboto, sans-serif; color: #3c4043; flex: none; padding-bottom: 4px; }
.caption-btn svg { width: 24px; height: 24px; fill: #5f6368; margin-bottom: 4px; }
.present-btn { width: 120px; margin-left: 38px; display: flex; flex-direction: column; align-items: center; text-align: center; font: 400 13.500px/17px Roboto, sans-serif; color: #3c4043; flex: none; margin-top: -2px; }
.present-btn svg { width: 24px; height: 24px; fill: #00796b; margin-bottom: 5px; }
.call-more { width: 4px; height: 16px; fill: #3c4043; margin-left: 43px; }

/* panel */
.panel { background: #fff; border-left: 1px solid #e0e0e0; display: flex; flex-direction: column; min-height: 0; }
.panel-head { height: 64px; flex: none; display: flex; align-items: center; justify-content: space-between; padding: 0 14px 2px 23px; font: 400 18px Roboto, sans-serif; color: #5f6368; }
.panel-head svg { width: 28px; height: 28px; fill: #5f6368; }
.panel-tabs { height: 51px; flex: none; display: flex; border-bottom: 1px solid #eee; font: 400 14.500px Roboto, sans-serif; letter-spacing: .3px; }
.ptab { display: flex; align-items: center; height: 50px; flex: none; white-space: nowrap; }
.people { width: 240px; padding-left: 36px; color: #5f6368; }
.people svg { width: 24px; height: 24px; fill: #5f6368; margin-right: 5px; }
.chat { width: 58px; color: #00796b; border-bottom: 3px solid #00796b; padding-top: 3px; }
.chat svg { width: 20px; height: 20px; fill: #00796b; margin-right: 7px; flex: none; }
.messages { flex: 1; min-height: 0; padding: 14px 0 0 23px; position: relative; overflow: hidden; font: 400 12.500px/18px Roboto, sans-serif; }
.msg { height: 67px; }
.meta { display: flex; gap: 8.500px; }
.meta b { font-weight: 500; color: #3c4043; letter-spacing: .22px; }
.meta time { color: #5f6368; font-size: 12px; }
.msg p { margin: 1px 0 0; color: #5f6368; }
.chat-thumb { position: absolute; right: 2px; bottom: 6px; width: 11px; height: 34px; background: #c6c6c6; }
.compose { height: 71px; flex: none; display: flex; align-items: flex-start; box-shadow: 0 -2px 3px rgba(0,0,0,.06); border-top: 1px solid #f0f0f0; padding: 24px 0 0 19px; position: relative; }
.compose-input { width: 268px; height: 26px; border-bottom: 2px solid #00796b; font: 400 13px/26px Roboto, sans-serif; color: #9aa0a6; display: flex; align-items: center; }
.caret { width: 1px; height: 17px; background: #202124; margin-right: -1px; }
.compose svg { width: 24px; height: 24px; margin: 0 0 0 23px; }
```
